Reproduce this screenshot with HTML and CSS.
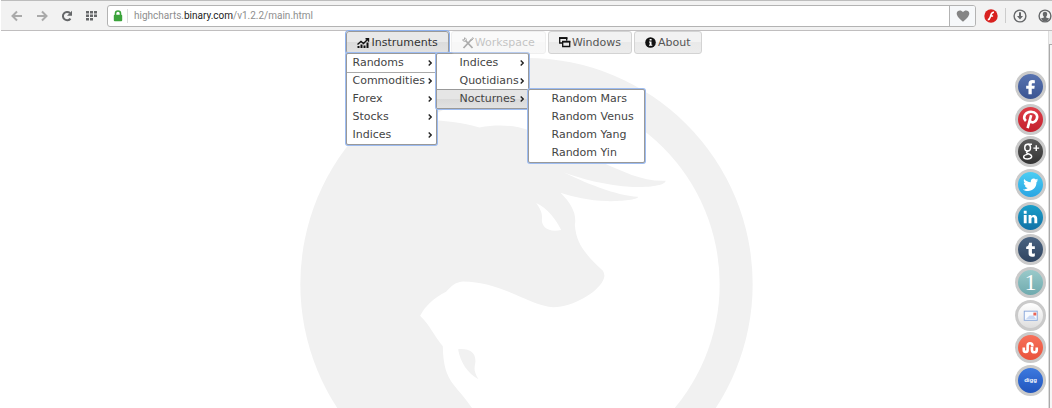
FILE: index.html
```html
<!DOCTYPE html>
<html lang="en">
<head>
<meta charset="utf-8">
<title>Binary charts</title>
<link rel="stylesheet" href="styles.css">
</head>
<body>
<header class="toolbar">
  <nav class="nav-buttons" aria-label="Browser">
    <button class="tool faded" aria-label="Back"><svg width="12" height="12" viewBox="0 0 12 12"><path d="M6 1.500 1.500 6 6 10.500M2 6h9" fill="none" stroke="currentColor" stroke-width="2"/></svg></button>
    <button class="tool faded" aria-label="Forward"><svg width="12" height="12" viewBox="0 0 12 12"><path d="M6 1.500 10.500 6 6 10.500M10 6H1" fill="none" stroke="currentColor" stroke-width="2"/></svg></button>
    <button class="tool" aria-label="Reload"><svg width="12" height="12" viewBox="0 0 12 12"><path d="M9.500 8.600A4.200 4.200 0 1 1 9 3" fill="none" stroke="currentColor" stroke-width="2"/><path d="M11 .8v5H6z" fill="currentColor"/></svg></button>
    <button class="tool" aria-label="Speed dial"><svg width="12" height="12" viewBox="0 0 12 12"><path d="M0 1h3v2.500H0zM4 1h3v2.500H4zM8 1h3v2.500H8zM0 4.500h3V7H0zM4 4.500h3V7H4zM8 4.500h3V7H8zM0 8h3v2.500H0zM4 8h3v2.500H4z" fill="currentColor"/></svg></button>
  </nav>
  <div class="address">
    <svg class="lock" width="10" height="12" viewBox="0 0 10 12"><path d="M2.500 6V3.500a2.500 2.500 0 0 1 5 0V6" fill="none" stroke="#3ba33b" stroke-width="1.600"/><rect x=".8" y="4.800" width="8.400" height="6.400" rx="1" fill="#3ba33b"/></svg>
    <div class="url" role="textbox" aria-label="Address" tabindex="0">highcharts.<span class="domain">binary.com</span>/v1.2.2/main.html</div>
    <button class="heart" aria-label="Bookmark"><svg width="14" height="12" viewBox="0 0 14 12"><path d="M7 11.800C4 9 .7 6.500.7 3.600.7.300 5-.8 7 2c2-2.800 6.300-1.700 6.300 1.600C13.300 6.500 10 9 7 11.800z" fill="#858585"/></svg></button>
  </div>
  <div class="extras">
    <button class="tool" aria-label="Flash"><svg width="14" height="14" viewBox="0 0 14 14"><circle cx="7" cy="7" r="6.700" fill="#d8211f"/><path d="M10 3.200C7 3 7 6 6.300 8c-.5 1.700-1 2.600-2.500 2.700M6.500 7h2.600" fill="none" stroke="#fff" stroke-width="1.600"/></svg></button>
    <span class="rule"></span>
    <button class="tool" aria-label="Downloads"><svg width="14" height="14" viewBox="0 0 14 14"><circle cx="7" cy="7" r="5.900" fill="none" stroke="currentColor" stroke-width="1.400"/><path d="M6 3.300h2V7h2L7 10.500 4 7h2z" fill="currentColor"/></svg></button>
    <button class="tool" aria-label="Account"><svg width="14" height="14" viewBox="0 0 14 14"><circle cx="7" cy="7" r="5.900" fill="none" stroke="currentColor" stroke-width="1.400"/><path d="M7 2.800c1.600 0 2.300 1 2.200 2.400 0 1.200-.6 2-1.100 2.500v.7l3 1.200C10 11.500 9 12.500 7 12.500S4 11.500 2.900 9.600l3-1.200v-.7C5.400 7.200 4.800 6.400 4.800 5.200 4.700 3.800 5.400 2.800 7 2.800z" fill="currentColor"/></svg></button>
  </div>
</header>

<div class="viewport">
<main class="page">
  <svg class="watermark" viewBox="0 0 1358 1050" aria-hidden="true">
    <defs><clipPath id="inner"><circle cx="679" cy="678" r="579"/></clipPath></defs>
    <circle cx="679" cy="678" r="678" fill="#f1f1f1"/>
    <g clip-path="url(#inner)"><g transform="translate(-32 -24)">
      <path fill="#fff" d="M390 210C450 208 515 217 570 232C625 222 675 225 716 240C780 265 850 310 940 338C1000 364 1060 395 1128 392C1128 404 1090 412 1030 411C950 407 870 385 820 366C880 395 980 438 1045 440C1048 449 990 454 950 453C900 452 850 440 813 428C845 460 862 490 856 525C860 580 885 610 940 662Q949 677 940 692C920 730 850 770 792 771C725 770 640 695 520 694C495 697 488 706 470 725C430 745 408 768 392 797C425 830 432 855 460 888C462 1000 500 1000 548 1074L600 1300H1400V0H390Z"/>
      <path fill="#fff" d="M740 459C775 475 800 510 815 540C775 548 757 530 757 510C759 495 757 482 740 459Z"/>
      <path fill="#f1f1f1" d="M506 897C540 894 558 907 558 932C557 950 549 957 567 987C535 970 512 935 506 897Z"/>
    </g></g>
  </svg>

  <ul class="menubar">
    <li class="entry">
      <button class="menu-button open" aria-expanded="true"><svg width="13" height="10" viewBox="0 0 13 10"><path d="M.5 10V8h2v2zM3.500 10V6.500h2V10zM6.500 10V7.500h2V10zM9.500 10V4.500h2V10z"/><path d="m.5 6.500 3.500-3 2.500 2L11 1M8.500.8h3v3" fill="none" stroke="currentColor" stroke-width="1.400"/></svg>Instruments</button>
      <ul class="menu">
        <li class="item active"><a href="#">Randoms</a><svg class="chevron" width="4" height="6" viewBox="0 0 4 6"><path d="m.7.5 2.500 2.500L.7 5.500"/></svg>
          <ul class="menu submenu indented">
            <li class="item"><a href="#">Indices</a><svg class="chevron" width="4" height="6" viewBox="0 0 4 6"><path d="m.7.5 2.500 2.500L.7 5.500"/></svg></li>
            <li class="item"><a href="#">Quotidians</a><svg class="chevron" width="4" height="6" viewBox="0 0 4 6"><path d="m.7.5 2.500 2.500L.7 5.500"/></svg></li>
            <li class="item active shaded"><a href="#">Nocturnes</a><svg class="chevron" width="4" height="6" viewBox="0 0 4 6"><path d="m.7.5 2.500 2.500L.7 5.500"/></svg>
              <ul class="menu submenu indented leaf">
                <li class="item"><a href="#">Random Mars</a></li>
                <li class="item"><a href="#">Random Venus</a></li>
                <li class="item"><a href="#">Random Yang</a></li>
                <li class="item"><a href="#">Random Yin</a></li>
              </ul>
            </li>
          </ul>
        </li>
        <li class="item"><a href="#">Commodities</a><svg class="chevron" width="4" height="6" viewBox="0 0 4 6"><path d="m.7.5 2.500 2.500L.7 5.500"/></svg></li>
        <li class="item"><a href="#">Forex</a><svg class="chevron" width="4" height="6" viewBox="0 0 4 6"><path d="m.7.5 2.500 2.500L.7 5.500"/></svg></li>
        <li class="item"><a href="#">Stocks</a><svg class="chevron" width="4" height="6" viewBox="0 0 4 6"><path d="m.7.5 2.500 2.500L.7 5.500"/></svg></li>
        <li class="item"><a href="#">Indices</a><svg class="chevron" width="4" height="6" viewBox="0 0 4 6"><path d="m.7.5 2.500 2.500L.7 5.500"/></svg></li>
      </ul>
    </li>
    <li class="entry"><button class="menu-button" disabled><svg width="12" height="12" viewBox="0 0 12 12"><path d="m3.500 3.500 7 7.500M9.500 2.500 1.500 11" fill="none" stroke="currentColor" stroke-width="1.800"/><path d="M2.500.8v2H.6C1 4.500 3 4.700 4 3.800 4.800 2.500 4 1 2.500.8zM9 2.500 11 .6l.6.8-2 2z" fill="none" stroke="currentColor"/></svg>Workspace</button></li>
    <li class="entry"><button class="menu-button"><svg width="12" height="11" viewBox="0 0 12 11"><path d="M3.500 6H.7V1h7v2.500M3.700 4.500h7v5h-7z" fill="none" stroke="currentColor" stroke-width="1.300"/><path d="M0 .300h8.400V2H0zM3 4h8.300v1.500H3z"/></svg>Windows</button></li>
    <li class="entry"><button class="menu-button"><svg width="12" height="12" viewBox="0 0 12 12"><circle cx="5.500" cy="5.500" r="5.300"/><path d="M4.600 2h2v1.500h-2zM4 4.500h2.500v3.300h.8v1H4v-1h.7V5.500H4z" fill="#fff"/></svg>About</button></li>
  </ul>

  <nav class="social" aria-label="Share">
    <a class="badge facebook" href="#" aria-label="Facebook"><svg viewBox="0 0 26 26"><path d="M17.500 6.500v3h-2c-1 0-1.200.5-1.200 1.300v1.400h3.100l-.4 3.100h-2.700V21h-3.400v-5.700H8.500v-3.100h2.400v-2.100c0-2.500 1.500-3.900 3.900-3.900z"/></svg></a>
    <a class="badge pinterest" href="#" aria-label="Pinterest"><svg viewBox="0 0 26 26"><path d="M8.200 14.500C4 10.500 8 5 13.500 5c5 0 7.500 3.500 6 7.500-1.300 3.600-5.500 4.500-7 2M13.700 8.500 10 22" fill="none" stroke="#fff" stroke-width="2.700"/></svg></a>
    <a class="badge google" href="#" aria-label="Google Plus"><svg viewBox="0 0 26 26"><g fill="none" stroke="#fff" stroke-width="1.500"><ellipse cx="10" cy="9" rx="3" ry="3.500"/><path d="M10 5.500h4.500M10.500 12.500c-2 1-2.500 2 0 2.800 6 2 4 5.500-.7 5.500-5 0-5.500-4 .2-4.800M16 9.500h6M19 6.500v6"/></g></svg></a>
    <a class="badge twitter" href="#" aria-label="Twitter"><svg viewBox="0 0 26 26"><path d="M21 8.500l-1.800.5c.8-.5 1.200-1.100 1.400-1.900l-2 .8c-2.200-2.300-5.900-.4-5.300 2.800C10.500 10.500 8.300 9.500 6.500 7.300c-.9 1.500-.5 3.300.9 4.300l-1.400-.4c0 1.600 1.100 2.900 2.600 3.200H7.100c.4 1.300 1.600 2.200 3 2.200-1.500 1.200-3.200 1.700-5.100 1.500 6.700 4 14.500-.2 14.200-7.400z"/></svg></a>
    <a class="badge linkedin" href="#" aria-label="LinkedIn"><svg viewBox="0 0 26 26"><path d="M6 10.500h3V19H6zM6 6h3v3H6zM11 10.500h2.900v1.200c2-2.500 6.100-1.500 6.100 2.300v5h-3v-4.500c0-2.500-3-2.200-3 0V19h-3z"/></svg></a>
    <a class="badge tumblr" href="#" aria-label="Tumblr"><svg viewBox="0 0 26 26"><path d="M11.500 6H14.500v3.600h3v2.900h-3V16c0 1.700 1.500 1.700 3 .9v3c-3.500 1.500-6.500.5-6.500-2.700v-4.700H8.500v-2.300c2-.5 2.800-2 3-4.200z"/></svg></a>
    <a class="badge counter" href="#">1</a>
    <a class="badge email" href="#" aria-label="Email"><svg viewBox="0 0 26 26"><rect x="6.500" y="8.500" width="13.500" height="9.500" fill="#f7faff" stroke="#8ba9dc"/><path d="m8 17 4-4h4l3 4z" fill="#c8d8f4"/><path d="M16 10h3v3h-3z" fill="#e96455"/></svg></a>
    <a class="badge stumble" href="#" aria-label="StumbleUpon"><svg viewBox="0 0 26 26"><path d="M6 13v2.500a2 2 0 0 0 4 0V11a2.500 2.500 0 0 1 5 0v1M14.500 12.500v3a2.500 2.500 0 0 0 5 0V13" fill="none" stroke="#fff" stroke-width="2.700"/></svg></a>
    <a class="badge digg" href="#">digg</a>
  </nav>
</main>
<div class="scrollbar"><div class="thumb"></div></div>
</div>
</body>
</html>
```
FILE: styles.css
```css
* { box-sizing: border-box; }
body {
  margin: 0;
  height: 100vh;
  display: flex;
  flex-direction: column;
  overflow: hidden;
  background: #fff;
  font: 11px/16px "DejaVu Sans", Verdana, sans-serif;
  color: #4a4a4a;
}
ul { list-style: none; margin: 0; padding: 0; }
a { color: inherit; text-decoration: none; }
button { font: inherit; color: inherit; margin: 0; }
svg { display: block; flex: none; }

.toolbar {
  flex: none;
  display: flex;
  align-items: center;
  height: 31px;
  margin-left: 1px;
  background: #f2f2f2;
  border-top: 1px solid #bdbdbd;
  border-bottom: 1px solid #c0bebf;
}
.nav-buttons { display: flex; gap: 13px; padding: 0 9px 0 10px; }
.tool {
  display: flex;
  padding: 0;
  border: 0;
  background: none;
  color: #656769;
}
.faded { color: #aaa; }
.address {
  flex: 1;
  display: flex;
  align-items: center;
  height: 22px;
  border: 1px solid #b3b3b3;
  border-radius: 3px;
  background: #fff;
}
.lock { margin: 0 4px 0 5px; }
.url {
  flex: 1;
  padding-left: 6px;
  border-left: 1px solid #ddd;
  font: 10px/14px Roboto, "Noto Sans", sans-serif;
  color: #8e8e8e;
}
.domain { color: #222; }
.heart {
  align-self: stretch;
  display: flex;
  align-items: center;
  justify-content: center;
  width: 26px;
  padding: 0;
  border: 0;
  border-left: 1px solid #b3b3b3;
  background: #f6f8fa;
  border-radius: 0 2px 2px 0;
}
.extras { display: flex; align-items: center; gap: 7px; padding-left: 8px; }
.extras .tool:last-child { margin-left: 4px; }
.rule { width: 1px; height: 15px; background: #ccc; }

.viewport { flex: 1; display: flex; min-height: 0; }
.page { flex: 1; position: relative; min-width: 0; }
.scrollbar {
  width: 4px;
  padding-top: 13px;
  background: #f0f0f0;
  border-left: 1px solid #ddd;
}
.thumb { height: 100%; border-left: 1px solid #aaa; border-top: 1px solid #aaa; background: #f6f6f6; }
.watermark {
  position: absolute;
  top: 27px;
  left: calc(50% - 224px);
  width: 453px;
}

.menubar { position: relative; display: flex; justify-content: center; gap: 2px; }
.entry { position: relative; }
.menu-button {
  display: flex;
  align-items: center;
  height: 23px;
  padding: 0 10px;
  border: 1px solid #d3d3d3;
  border-radius: 3px;
  background: linear-gradient(#f2f2f2 50%, #e9e9e9 50%, #ececec);
  color: #555;
}
.menu-button svg { fill: #111; color: #111; margin-right: 1px; }
.menu-button:disabled { opacity: .35; }
.open {
  border-color: #999;
  box-shadow: 0 0 0 1px #8fb2ee;
  background: linear-gradient(#e9e9e9 50%, #dcdcdc 50%, #e2e2e2);
  color: #333;
}
.menu {
  position: absolute;
  top: 22px;
  left: 0;
  width: 91px;
  border: 1px solid #999;
  border-radius: 2px;
  background: #fff;
  box-shadow: 0 0 0 1px #9dbcf1;
  color: #444;
}
.item {
  position: relative;
  display: flex;
  align-items: center;
  justify-content: space-between;
  height: 18px;
  padding: 0 4px 0 5px;
  white-space: nowrap;
}
.active { box-shadow: 0 1px #aaa; }
.shaded {
  box-shadow: 0 -1px #999, 0 1px #999;
  background: linear-gradient(#e5e5e5 50%, #d9d9d9 50%, #e2e2e2);
}
.chevron { fill: none; stroke: #222; stroke-width: 1.400; }
.submenu { top: -1px; left: 89px; width: 93px; }
.indented > .item { padding-left: 22px; }
.leaf { left: 91px; width: 117px; }

.social {
  position: absolute;
  top: 40px;
  right: 2px;
  display: flex;
  flex-direction: column;
  justify-content: space-between;
  height: 325px;
}
.badge {
  display: grid;
  place-items: center;
  width: 31px;
  height: 31px;
  border: 3px solid #cacaca;
  border-radius: 50%;
  color: #fff;
}
.badge svg { width: 25px; height: 25px; fill: #fff; }
.facebook { background: linear-gradient(#5873b0, #3b5592); }
.pinterest { background: linear-gradient(#de3d47, #c3202d); }
.google { background: linear-gradient(#5b5b5b, #333); }
.twitter { background: linear-gradient(#4bcdf3, #2aa5e3); }
.linkedin { background: linear-gradient(#1a9fca, #1271a6); }
.tumblr { background: linear-gradient(#4a6381, #2f4460); }
.counter { background: linear-gradient(#9acaca, #6faaae); font: 24px/24px "Liberation Serif", serif; }
.email { background: linear-gradient(#fff, #dedede); }
.stumble { background: linear-gradient(#f7705a, #e9533c); }
.digg { background: linear-gradient(#3d79df, #2155bd); font: bold 6px/12px "Liberation Sans", sans-serif; }
```
